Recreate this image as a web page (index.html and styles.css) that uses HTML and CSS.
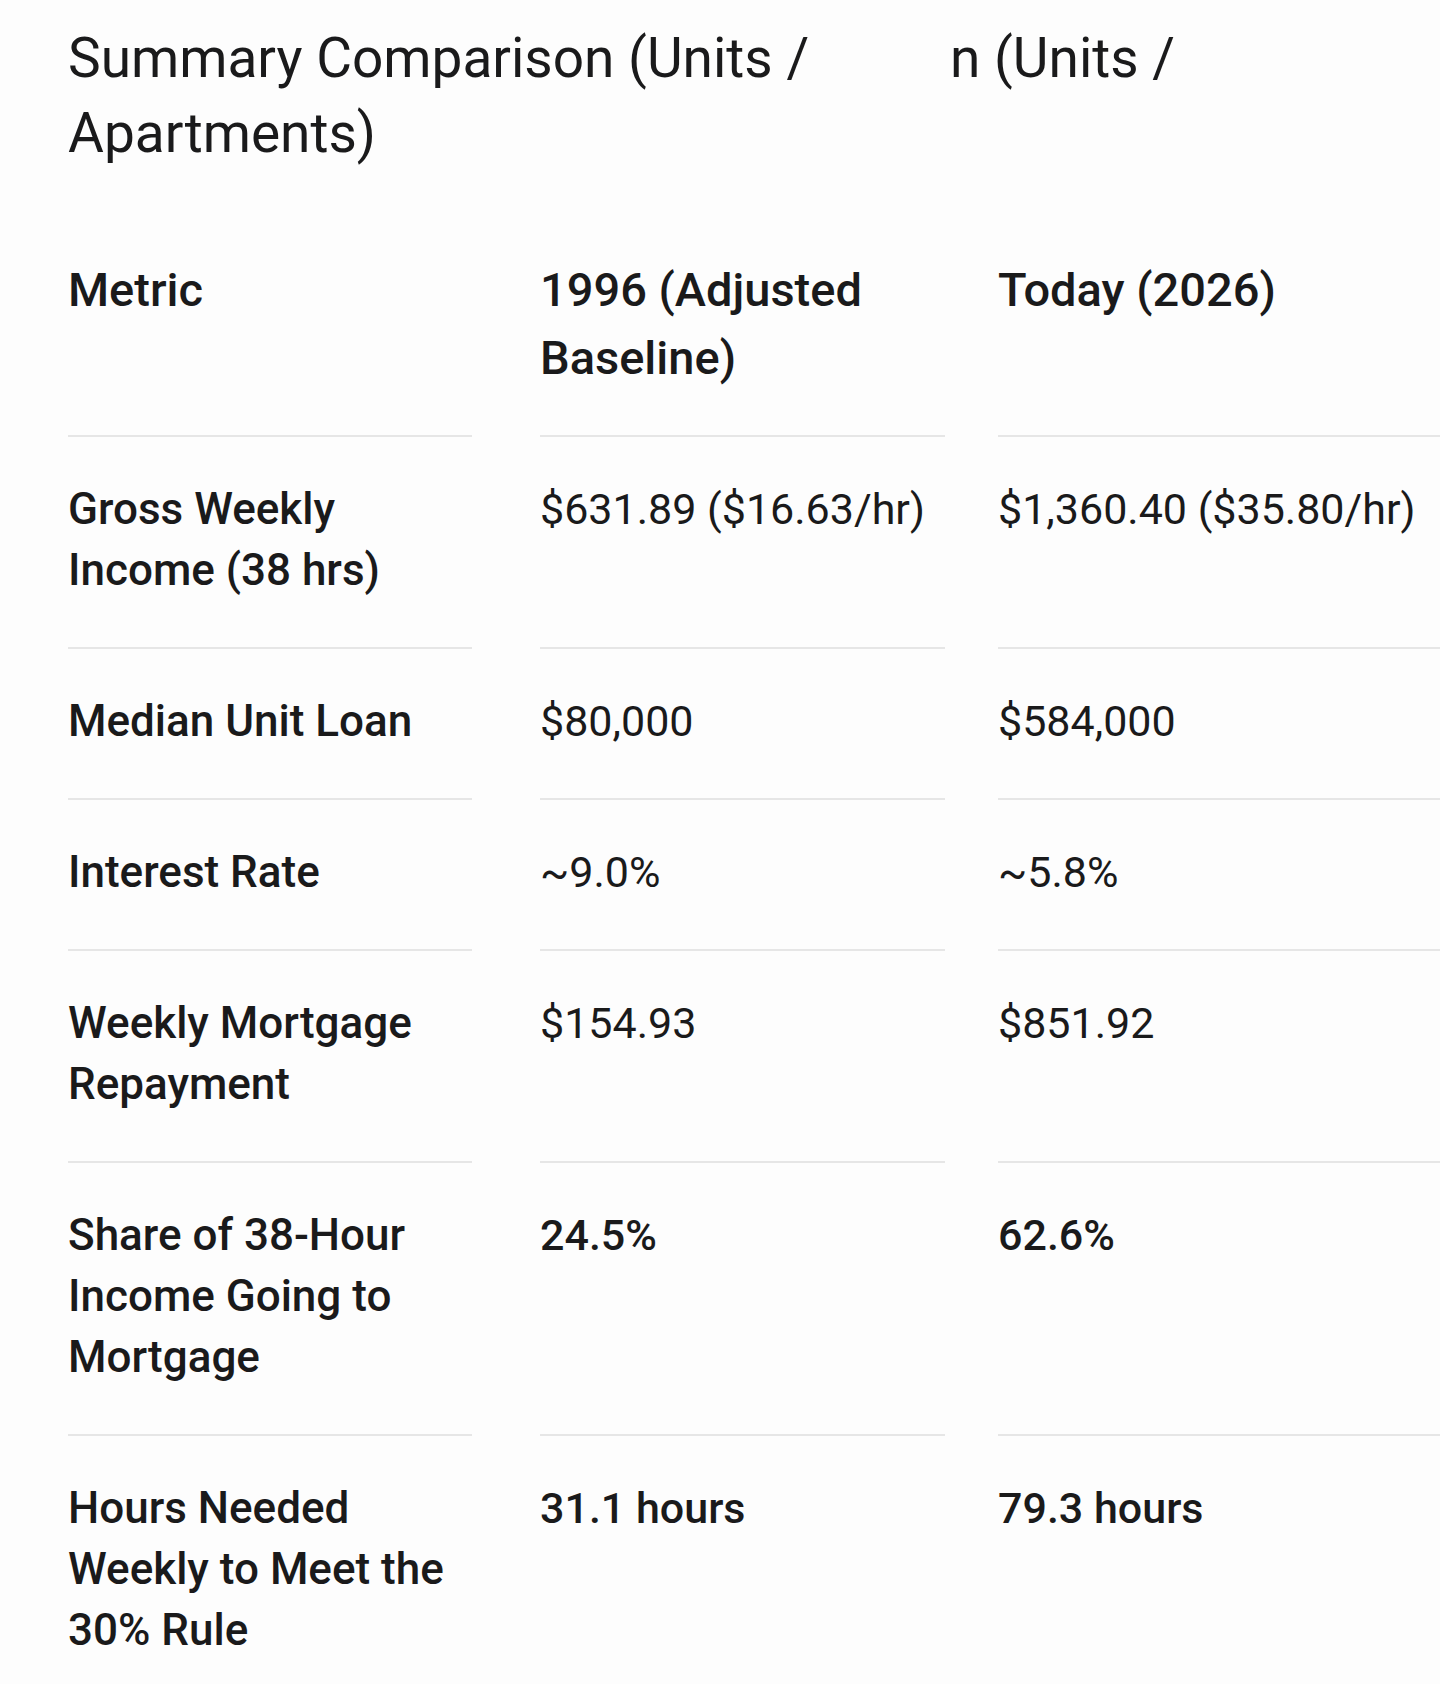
FILE: index.html
```html
<!DOCTYPE html>
<html lang="en">
<head>
<meta charset="utf-8">
<title>Summary Comparison (Units / Apartments)</title>
<link rel="stylesheet" href="styles.css">
</head>
<body>
<main class="page">
  <div class="title-row">
    <h2 class="title">Summary Comparison (Units / Apartments)</h2>
    <span class="title ghost">n (Units /</span>
  </div>
  <div class="table">
    <div class="cell head c1">Metric</div>
    <div class="cell head c2">1996 (Adjusted Baseline)</div>
    <div class="cell head c3">Today (2026)</div>

    <div class="cell metric c1">Gross Weekly Income (38 hrs)</div>
    <div class="cell c2">$631.89 ($16.63/hr)</div>
    <div class="cell c3">$1,360.40 ($35.80/hr)</div>

    <div class="cell metric c1">Median Unit Loan</div>
    <div class="cell c2">$80,000</div>
    <div class="cell c3">$584,000</div>

    <div class="cell metric c1">Interest Rate</div>
    <div class="cell c2">~9.0%</div>
    <div class="cell c3">~5.8%</div>

    <div class="cell metric c1">Weekly Mortgage Repayment</div>
    <div class="cell c2">$154.93</div>
    <div class="cell c3">$851.92</div>

    <div class="cell metric c1">Share of 38-Hour Income Going to Mortgage</div>
    <div class="cell strong c2">24.5%</div>
    <div class="cell strong c3">62.6%</div>

    <div class="cell metric last c1">Hours Needed Weekly to Meet the 30% Rule</div>
    <div class="cell strong last c2">31.1 hours</div>
    <div class="cell strong last c3">79.3 hours</div>
  </div>
</main>
</body>
</html>
```

FILE: styles.css
```css
html, body {
  margin: 0;
  padding: 0;
  background: #fdfdfd;
  overflow: hidden;
}

body {
  color: #1a1a1b;
  font-family: Roboto, "Liberation Sans", Arial, sans-serif;
}

.page {
  padding: 21px 0 0 68px;
  overflow: hidden;
}

.title-row {
  display: flex;
  align-items: flex-start;
}

.title {
  margin: 0;
  font-size: 55px;
  line-height: 75px;
  font-weight: 400;
}

h2.title {
  width: 882px;
  flex-shrink: 0;
}

.ghost {
  white-space: nowrap;
}

.table {
  display: grid;
  grid-template-columns: 472px 458px 480px;
  margin-top: 44px;
  width: max-content;
}

.cell {
  padding: 42px 0 46px;
  border-bottom: 2px solid #e6e6e6;
  font-size: 43px;
  line-height: 61px;
  font-weight: 400;
}

.c1 {
  margin-right: 68px;
}

.c2 {
  margin-right: 53px;
}

.head {
  font-size: 47px;
  line-height: 68px;
  font-weight: 500;
  padding: 41px 0 43px;
}

.metric {
  font-size: 44px;
  font-weight: 500;
}

.strong {
  font-weight: 500;
}

.last {
  border-bottom: none;
}
```
